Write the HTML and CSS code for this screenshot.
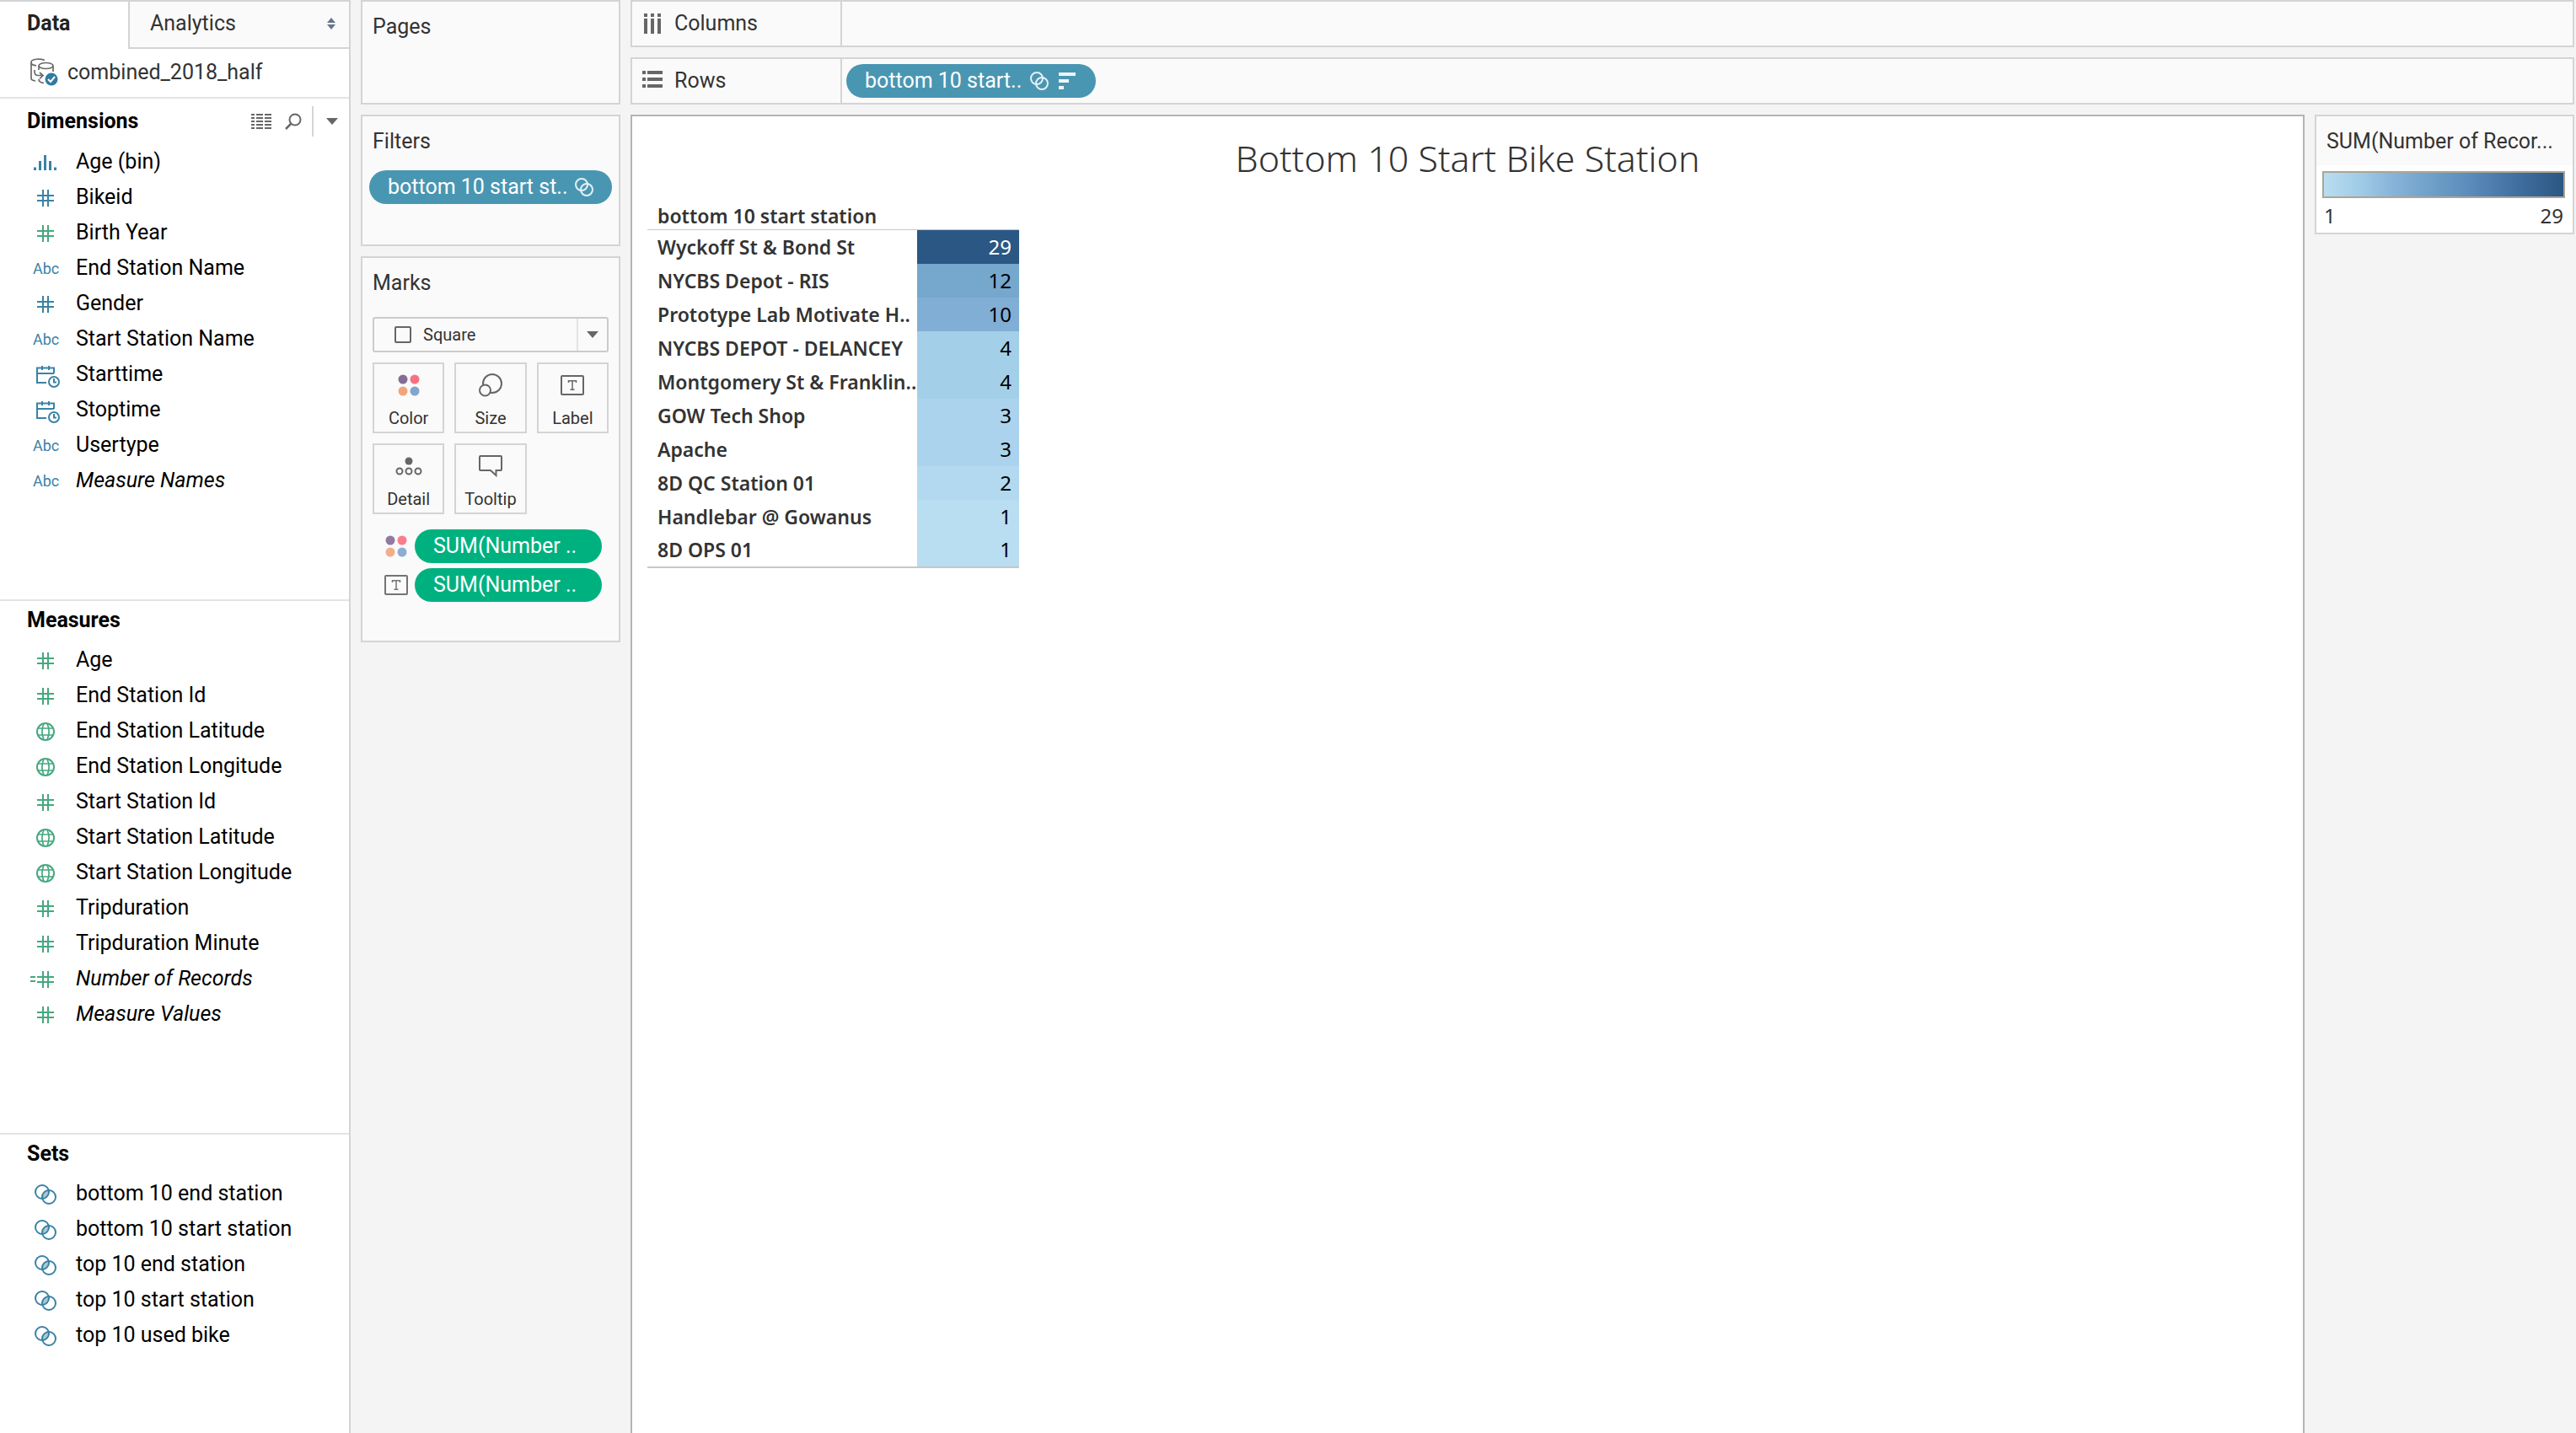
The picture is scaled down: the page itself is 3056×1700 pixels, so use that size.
FILE: index.html
```html
<!DOCTYPE html>
<html lang="en">
<head>
<meta charset="utf-8">
<title>Bottom 10 Start Bike Station</title>
<link rel="stylesheet" href="styles.css">
</head>
<body>
<svg class="sprite" aria-hidden="true">
  <symbol id="hash" viewBox="0 0 36 42"><path d="M15 12v20M21 12v20M8 19h20M8 25h20" fill="none" stroke="currentColor" stroke-width="2"/></symbol>
  <symbol id="calc-hash" viewBox="0 0 36 42"><path d="M15 12v20M21 12v20M8 19h20M8 25h20M0 19h6M0 24h6" fill="none" stroke="currentColor" stroke-width="2"/></symbol>
  <symbol id="bin" viewBox="0 0 36 42"><path d="M5.500 27.500v3.500M11.500 20v11M17.500 13v18M23.500 20v11M29.500 27.500v3.500" fill="none" stroke="currentColor" stroke-width="3"/></symbol>
  <symbol id="datetime" viewBox="0 0 36 42"><g fill="none" stroke="currentColor" stroke-width="2"><path d="M28 20V13.500H8V31h11M8 20h20M14 11v5M22 11v5"/><circle cx="28" cy="30" r="6"/><path d="M28 26v4.500h3"/></g></symbol>
  <symbol id="globe" viewBox="0 0 36 42"><g fill="none" stroke="currentColor"><circle cx="18" cy="22" r="10" stroke-width="2"/><path d="M9 18h18M9 26h18M16 12.500c-2.700 6-2.700 13 0 19M20 12.500c2.700 6 2.700 13 0 19" stroke-width="1.700"/></g></symbol>
  <symbol id="set" viewBox="0 0 36 42"><path d="M14.250 27A8 8 0 0 1 21.750 17A8 8 0 0 1 14.250 27z" fill="#a9c9d6"/><g fill="none" stroke="currentColor" stroke-width="2"><circle cx="14" cy="19" r="8"/><circle cx="22" cy="25" r="8"/></g></symbol>
  <symbol id="set-small" viewBox="0 0 22 22"><g fill="none" stroke="currentColor" stroke-width="2"><circle cx="8" cy="8" r="7"/><circle cx="14" cy="14" r="7"/></g></symbol>
  <symbol id="color-dots" viewBox="0 0 26 26"><circle cx="6" cy="6" r="5.500" fill="#866d97"/><circle cx="20" cy="6" r="5.500" fill="#f97082"/><circle cx="6" cy="20" r="5.500" fill="#f2a57d"/><circle cx="20" cy="20" r="5.500" fill="#82a5cd"/></symbol>
  <symbol id="text-box" viewBox="0 0 28 24"><rect x="1" y="1" width="26" height="22" rx="1" fill="none" stroke="currentColor" stroke-width="2"/><path d="M9.500 9V6.700h9V9M14 6.700V17.200M11.500 17.300h5" fill="none" stroke="currentColor" stroke-width="1.500"/></symbol>
  <symbol id="caret" viewBox="0 0 14 8"><path d="M0 0h14L7 8z" fill="currentColor"/></symbol>
</svg>
<div class="app">
  <aside class="data-pane">
    <div class="tabs" role="tablist">
      <button class="tab tab-active" role="tab" aria-selected="true">Data</button>
      <button class="tab tab-idle" role="tab" aria-selected="false">Analytics
        <svg width="10" height="14" viewBox="0 0 10 14" aria-hidden="true"><path d="M5 0l5 6H0zM0 8h10l-5 6z" fill="#67778a"/></svg>
      </button>
    </div>
    <button class="source">
      <svg width="34" height="34" viewBox="0 0 34 34" aria-hidden="true">
        <g fill="none" stroke="#6a6a6a" stroke-width="1.700"><path d="M17 2.500C12 .3 1 .5 1 5v19c0 1.500 2 2.600 5 3M1 5c0 2 2 3.500 6 3.800"/><ellipse cx="18.500" cy="9" rx="8.500" ry="3.500"/><path d="M10 9v5M27 9v7M5 14v2c0 3 2 4.500 4 4.500h6M11 17l4 3.500-4 4M10 25c0 2.500 2 4 6 4.500"/></g>
        <circle cx="25" cy="25" r="7.500" fill="#2f7ba1"/><path d="M21 25l3 3 5-6" fill="none" stroke="#fff" stroke-width="2"/>
      </svg>
      combined_2018_half
    </button>
    <section class="fields fields-first">
      <div class="fields-head">
        <h2>Dimensions</h2>
        <button class="tool" aria-label="View data"><svg width="24" height="18" viewBox="0 0 24 18"><path d="M0 1h4M6 1h8M16 1h8M0 5h4M6 5h8M16 5h8M0 9h4M6 9h8M16 9h8M0 13h4M6 13h8M16 13h8M0 17h4M6 17h8M16 17h8" stroke="#666" stroke-width="2"/></svg></button>
        <button class="tool" aria-label="Find field"><svg width="20" height="20" viewBox="0 0 20 20"><g fill="none" stroke="#666" stroke-width="2"><circle cx="12" cy="8" r="6.500"/><path d="M7.500 12.500L1 19" stroke-width="2.500"/></g></svg></button>
        <button class="tool tool-menu" aria-label="Menu"><svg width="14" height="8"><use href="#caret"/></svg></button>
      </div>
      <ul>
        <li><svg class="dim"><use href="#bin"/></svg>Age (bin)</li>
        <li><svg class="dim"><use href="#hash"/></svg>Bikeid</li>
        <li><svg class="mea"><use href="#hash"/></svg>Birth Year</li>
        <li><span class="abc">Abc</span>End Station Name</li>
        <li><svg class="dim"><use href="#hash"/></svg>Gender</li>
        <li><span class="abc">Abc</span>Start Station Name</li>
        <li><svg class="dim"><use href="#datetime"/></svg>Starttime</li>
        <li><svg class="dim"><use href="#datetime"/></svg>Stoptime</li>
        <li><span class="abc">Abc</span>Usertype</li>
        <li><span class="abc">Abc</span><em>Measure Names</em></li>
      </ul>
    </section>
    <section class="fields">
      <div class="fields-head"><h2>Measures</h2></div>
      <ul>
        <li><svg class="mea"><use href="#hash"/></svg>Age</li>
        <li><svg class="mea"><use href="#hash"/></svg>End Station Id</li>
        <li><svg class="mea"><use href="#globe"/></svg>End Station Latitude</li>
        <li><svg class="mea"><use href="#globe"/></svg>End Station Longitude</li>
        <li><svg class="mea"><use href="#hash"/></svg>Start Station Id</li>
        <li><svg class="mea"><use href="#globe"/></svg>Start Station Latitude</li>
        <li><svg class="mea"><use href="#globe"/></svg>Start Station Longitude</li>
        <li><svg class="mea"><use href="#hash"/></svg>Tripduration</li>
        <li><svg class="mea"><use href="#hash"/></svg>Tripduration Minute</li>
        <li><svg class="mea"><use href="#calc-hash"/></svg><em>Number of Records</em></li>
        <li><svg class="mea"><use href="#hash"/></svg><em>Measure Values</em></li>
      </ul>
    </section>
    <section class="fields">
      <div class="fields-head"><h2>Sets</h2></div>
      <ul>
        <li><svg class="dim"><use href="#set"/></svg>bottom 10 end station</li>
        <li><svg class="dim"><use href="#set"/></svg>bottom 10 start station</li>
        <li><svg class="dim"><use href="#set"/></svg>top 10 end station</li>
        <li><svg class="dim"><use href="#set"/></svg>top 10 start station</li>
        <li><svg class="dim"><use href="#set"/></svg>top 10 used bike</li>
      </ul>
    </section>
  </aside>

  <div class="cards">
    <section class="card card-pages"><h3>Pages</h3></section>
    <section class="card card-filters">
      <h3>Filters</h3>
      <button class="pill pill-dim">bottom 10 start st..<svg class="pill-icon"><use href="#set-small"/></svg></button>
    </section>
    <section class="card card-marks">
      <h3><label for="mark-type">Marks</label></h3>
      <div class="mark-select">
        <select id="mark-type"><option>Square</option></select>
        <svg class="mark-shape" width="20" height="20" aria-hidden="true"><rect x="1" y="1" width="18" height="18" rx="1" fill="none" stroke="#666" stroke-width="2"/></svg>
        <span class="mark-arrow"><svg width="14" height="8"><use href="#caret"/></svg></span>
      </div>
      <div class="mark-buttons">
        <button><svg width="26" height="26"><use href="#color-dots"/></svg>Color</button>
        <button><svg width="28" height="28" viewBox="0 0 28 28"><g fill="#fafafa" stroke="#666" stroke-width="2"><circle cx="16" cy="12" r="11"/><circle cx="7.500" cy="20" r="6.500"/></g></svg>Size</button>
        <button><svg width="28" height="24"><use href="#text-box"/></svg>Label</button>
        <button><svg width="32" height="22" viewBox="0 0 32 22"><circle cx="16" cy="5" r="4.500" fill="#666"/><g fill="none" stroke="#666" stroke-width="2"><circle cx="5" cy="17" r="3.500"/><circle cx="16" cy="17" r="3.500"/><circle cx="27" cy="17" r="3.500"/></g></svg>Detail</button>
        <button><svg width="28" height="26" viewBox="0 0 28 26"><path d="M2 1h24a1 1 0 0 1 1 1v15a1 1 0 0 1-1 1h-5.500v6L14 18H2a1 1 0 0 1-1-1V2a1 1 0 0 1 1-1z" fill="none" stroke="#666" stroke-width="2"/></svg>Tooltip</button>
      </div>
      <ul class="encodings">
        <li><svg class="faded" width="26" height="26"><use href="#color-dots"/></svg><button class="pill pill-mea">SUM(Number ..</button></li>
        <li><svg class="faded" width="28" height="24"><use href="#text-box"/></svg><button class="pill pill-mea">SUM(Number ..</button></li>
      </ul>
    </section>
  </div>

  <main class="work">
    <section class="shelf">
      <h3><svg width="28" height="24" viewBox="0 0 28 24"><path d="M4 0v4M12 0v4M20 0v4M4 6v18M12 6v18M20 6v18" stroke="#666" stroke-width="4"/></svg>Columns</h3>
    </section>
    <section class="shelf">
      <h3><svg width="28" height="24" viewBox="0 0 28 24"><path d="M0 2h4M6 2h18M0 10h4M6 10h18M0 18h4M6 18h18" stroke="#666" stroke-width="4"/></svg>Rows</h3>
      <button class="pill pill-dim">bottom 10 start..<svg class="pill-icon"><use href="#set-small"/></svg><svg class="sort-icon" viewBox="0 0 20 20"><path d="M0 2h20M0 10h12M0 18h6" stroke="currentColor" stroke-width="4"/></svg></button>
    </section>
    <div class="stage">
      <section class="sheet">
        <h1>Bottom 10 Start Bike Station</h1>
        <table>
          <thead><tr><th scope="col">bottom 10 start station</th><td></td></tr></thead>
          <tbody>
            <tr><th scope="row">Wyckoff St &amp; Bond St</th><td class="v29">29</td></tr>
            <tr><th scope="row">NYCBS Depot - RIS</th><td class="v12">12</td></tr>
            <tr><th scope="row">Prototype Lab Motivate H..</th><td class="v10">10</td></tr>
            <tr><th scope="row">NYCBS DEPOT - DELANCEY</th><td class="v4">4</td></tr>
            <tr><th scope="row">Montgomery St &amp; Franklin..</th><td class="v4">4</td></tr>
            <tr><th scope="row">GOW Tech Shop</th><td class="v3">3</td></tr>
            <tr><th scope="row">Apache</th><td class="v3">3</td></tr>
            <tr><th scope="row">8D QC Station 01</th><td class="v2">2</td></tr>
            <tr><th scope="row">Handlebar @ Gowanus</th><td class="v1">1</td></tr>
            <tr><th scope="row">8D OPS 01</th><td class="v1">1</td></tr>
          </tbody>
        </table>
      </section>
      <aside class="legend">
        <h3>SUM(Number of Recor...</h3>
        <div class="ramp"></div>
        <div class="ramp-range"><span>1</span><span>29</span></div>
      </aside>
    </div>
  </main>
</div>
</body>
</html>
```
FILE: styles.css
```css
* { box-sizing: border-box; }

body {
  margin: 0;
  background: #f4f4f4;
  color: #333;
  font: 25px/28px Roboto, "Liberation Sans", sans-serif;
}

h1, h2, h3, ul { margin: 0; padding: 0; font-size: inherit; font-weight: 400; list-style: none; }
button, select { margin: 0; padding: 0; border: 0; background: none; color: inherit; font: inherit; text-align: left; }
svg { flex: none; }
.sprite { display: none; }

.app {
  display: grid;
  grid-template-columns: 416px 308px minmax(0, 1fr);
  column-gap: 12px;
  min-height: 100vh;
  padding-right: 2px;
}

/* Data pane */
.data-pane { border-top: 2px solid #d4d4d4; border-right: 2px solid #d4d4d4; background: #fff; }
.tabs { display: flex; height: 56px; }
.tab { display: flex; align-items: center; padding-bottom: 4px; }
.tab-active { width: 152px; padding-left: 32px; color: #222; font-weight: 700; }
.tab-idle {
  flex: 1;
  justify-content: space-between;
  padding: 0 16px 2px 24px;
  border: solid #d4d4d4;
  border-width: 0 0 2px 2px;
  background: #fafafa;
}
.source { display: flex; align-items: center; gap: 10px; width: 100%; height: 57px; padding: 0 0 2px 36px; }

.fields { padding-bottom: 120px; border-top: 2px solid #e3e3e3; color: #000; }
.fields:last-child { padding-bottom: 0; }
.fields-head { display: flex; align-items: center; height: 49px; padding: 0 0 4px 32px; }
.fields-first .fields-head { height: 54px; padding-bottom: 0; }
.fields-head h2 { flex: 1; font-weight: 700; }
.tool { display: flex; align-items: center; justify-content: center; height: 36px; margin-right: 16px; color: #666; }
.tool-menu { width: 44px; margin-right: 0; padding-left: 2px; border-left: 2px solid #d4d4d4; }
.tool + .tool-menu { margin-left: -4px; }
.fields li { display: flex; align-items: center; height: 42px; padding-left: 36px; }
.fields li svg, .abc { flex: none; width: 36px; height: 42px; margin-right: 18px; }
.abc { padding-left: 3px; color: #3a82a5; font-size: 18px; line-height: 44px; }
.dim { color: #3a82a5; }
.mea { color: #45a880; }

/* Cards */
.cards { display: flex; flex-direction: column; gap: 12px; }
.card { padding: 16px 8px 0; border: 2px solid #d4d4d4; background: #fafafa; }
.card h3 { padding-left: 4px; }
.card-pages { height: 124px; }
.card-filters { height: 156px; }
.card-marks { padding: 16px 12px 46px; }
.card-marks h3 { padding-left: 0; }

.pill { display: flex; align-items: center; height: 40px; padding: 0 22px; border-radius: 20px; color: #fff; white-space: nowrap; }
.pill-dim { background: #4996b2; }
.pill-mea { background: #00b180; }
.pill-icon { width: 22px; height: 22px; color: #e4f0f5; }
.sort-icon { width: 20px; height: 20px; margin-left: 12px; color: #edf5f8; }
.card-filters .pill { justify-content: space-between; width: 288px; margin-top: 20px; }

.mark-select {
  display: grid;
  grid-template-columns: 60px 1fr 36px;
  align-items: center;
  height: 42px;
  margin-top: 26px;
  border: 2px solid #cbcbcb;
  border-radius: 3px;
  font-size: 20px;
}
.mark-select > * { grid-row: 1; }
.mark-select select { grid-column: 1 / -1; width: 100%; height: 38px; padding-left: 58px; appearance: none; }
.mark-shape { grid-column: 1; margin-left: 24px; pointer-events: none; }
.mark-arrow {
  grid-column: 3;
  display: flex;
  align-items: center;
  justify-content: center;
  height: 38px;
  border-left: 2px solid #e3e3e3;
  color: #666;
  pointer-events: none;
}
.mark-buttons { display: grid; grid-template-columns: repeat(3, 1fr); gap: 12px; margin-top: 12px; }
.mark-buttons button {
  display: grid;
  grid-template-rows: 50px 28px;
  align-items: center;
  justify-items: center;
  height: 84px;
  border: 2px solid #d4d4d4;
  font-size: 20px;
  line-height: 28px;
}
.mark-buttons svg, .encodings svg { color: #666; }
.encodings { display: grid; gap: 6px; margin-top: 18px; }
.encodings li { display: grid; grid-template-columns: 28px 222px; align-items: center; justify-items: center; gap: 8px; padding-left: 14px; }
.encodings .pill { width: 100%; }
.faded { opacity: .9; }

/* Shelves */
.work { display: flex; flex-direction: column; gap: 12px; }
.shelf { display: flex; align-items: center; height: 56px; border: 2px solid #d4d4d4; background: #fafafa; }
.shelf h3 { display: flex; align-items: center; gap: 10px; width: 249px; height: 52px; padding-left: 12px; border-right: 2px solid #d4d4d4; }
.shelf .pill { width: 296px; margin-left: 5px; padding-right: 24px; }
.shelf .pill-icon { margin-left: auto; }

/* Sheet */
.stage { display: flex; flex: 1; align-items: flex-start; gap: 12px; }
.sheet { flex: 1; align-self: stretch; padding: 24px 18px; border: solid #b4b4b4; border-width: 2px 2px 0; background: #fff; }
.sheet h1 { margin-bottom: 28px; font: 300 43px/52px "Noto Sans", sans-serif; text-align: center; }
.sheet table { width: 441px; border-collapse: collapse; table-layout: fixed; border-bottom: 2px solid #c8c8c8; font: 23px/28px "Noto Sans", sans-serif; }
.sheet tr { height: 40px; }
.sheet thead tr { height: 30px; border-bottom: 1px solid #c8c8c8; }
.sheet th { padding: 0 0 0 12px; font-weight: 600; text-align: left; white-space: nowrap; }
.sheet thead th { padding-bottom: 2px; }
.sheet td { width: 121px; padding: 0 9px 0 0; color: #000; font-size: 24px; text-align: right; }
.sheet .v29 { background: #2a5783; color: #fff; }
.sheet .v12 { background: #76a7cd; }
.sheet .v10 { background: #80aed4; }
.sheet .v4 { background: #a3cfe9; }
.sheet .v3 { background: #abd3ed; }
.sheet .v2 { background: #b2d9ef; }
.sheet .v1 { background: #b9ddf1; }

/* Colour legend */
.legend { width: 308px; padding-bottom: 6px; border: 2px solid #d4d4d4; background: #fff; }
.legend h3 { height: 58px; padding: 16px 12px 0; background: #fafafa; white-space: nowrap; }
.ramp {
  height: 32px;
  margin: 7px 9px 0 7px;
  border: 2px solid #aca594;
  background: linear-gradient(to right, #b9ddf1 0%, #9fcae6 16%, #86b3d9 29%, #6fa0c8 45%, #5b8bb9 61%, #4a78ab 74%, #42709f 80%, #2a5783 100%);
}
.ramp-range { display: flex; justify-content: space-between; margin: 7px 11px 0 9px; font-family: "Noto Sans", sans-serif; font-size: 24px; }
```
